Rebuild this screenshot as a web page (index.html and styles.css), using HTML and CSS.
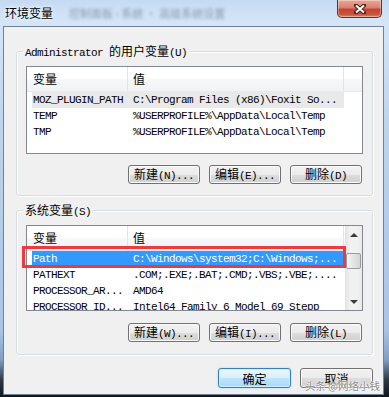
FILE: index.html
```html
<!DOCTYPE html>
<html lang="zh-CN">
<head>
    <meta charset="UTF-8">
    <meta name="viewport" content="width=device-width, initial-scale=1.0">
    <title>环境变量</title>
    <link rel="stylesheet" href="styles.css">
</head>
<body>
    <div class="window">
        <div class="titlebar">
            <span class="title">环境变量</span>
            <span class="ghost">控制面板 › 系统 · 高级系统设置</span>
            <button class="close" aria-label="关闭">
                <svg width="12" height="10" viewBox="0 0 12 10">
                    <path d="M2 1.5 L10 8.5 M10 1.5 L2 8.5" stroke="#4a2018" stroke-width="4" stroke-linecap="square"/>
                    <path d="M2 1.5 L10 8.5 M10 1.5 L2 8.5" stroke="#fff" stroke-width="2"/>
                </svg>
            </button>
        </div>

        <div class="client">
            <section class="group">
                <div class="group-label"><span class="mono">Administrator </span>的用户变量<span class="mono">(U)</span></div>
                <div class="listview user">
                    <div class="lv-body">
                        <div class="lv-header">
                            <div class="col col-name">变量</div>
                            <div class="col col-value">值</div>
                        </div>
                        <div class="row inactive"><span class="name">MOZ_PLUGIN_PATH</span><span>C:\Program Files (x86)\Foxit So...</span></div>
                        <div class="row"><span class="name">TEMP</span><span>%USERPROFILE%\AppData\Local\Temp</span></div>
                        <div class="row"><span class="name">TMP</span><span>%USERPROFILE%\AppData\Local\Temp</span></div>
                    </div>
                </div>
                <div class="actions">
                    <button class="btn">新建<span class="mono">(N)...</span></button>
                    <button class="btn">编辑<span class="mono">(E)...</span></button>
                    <button class="btn">删除<span class="mono">(D)</span></button>
                </div>
            </section>

            <section class="group system">
                <div class="group-label">系统变量<span class="mono">(S)</span></div>
                <div class="listview">
                    <div class="lv-body">
                        <div class="lv-header">
                            <div class="col col-name">变量</div>
                            <div class="col col-value">值</div>
                        </div>
                        <div class="row selected"><span class="name">Path</span><span>C:\Windows\system32;C:\Windows;...</span></div>
                        <div class="row"><span class="name">PATHEXT</span><span>.COM;.EXE;.BAT;.CMD;.VBS;.VBE;....</span></div>
                        <div class="row"><span class="name">PROCESSOR_AR...</span><span>AMD64</span></div>
                        <div class="row"><span class="name">PROCESSOR_ID...</span><span>Intel64 Family 6 Model 69 Stepp</span></div>
                    </div>
                    <div class="scrollbar">
                        <div class="sb-btn"><span class="arrow-up"></span></div>
                        <div class="sb-track"><div class="sb-thumb"></div></div>
                        <div class="sb-btn"><span class="arrow-down"></span></div>
                    </div>
                    <div class="mark"></div>
                </div>
                <div class="actions">
                    <button class="btn">新建<span class="mono">(W)...</span></button>
                    <button class="btn">编辑<span class="mono">(I)...</span></button>
                    <button class="btn">删除<span class="mono">(L)</span></button>
                </div>
            </section>

            <div class="footer">
                <button class="btn default">确定</button>
                <button class="btn">取消</button>
                <span class="watermark">头条 @网络小钱</span>
            </div>
        </div>
    </div>
</body>
</html>
```

FILE: styles.css
```css
body {
    margin: 0;
    font-family: "Noto Sans CJK SC", "Liberation Sans", sans-serif;
    font-size: 12px;
    color: #000;
    background: #1b232c;
}
.window {
    width: 389px;
    height: 397px;
    display: flex;
    flex-direction: column;
    background: linear-gradient(to bottom, #c5daf2 0px, #d4e5f8 22px, #bdd5ef 120px, #a8c5e7 330px, #7f9ec1 360px, #2c3846 380px, #10161c 397px);
}
.titlebar {
    height: 26px;
    flex-shrink: 0;
    display: flex;
    align-items: flex-start;
}
.title {
    margin: 4px 0 0 5px;
    line-height: 17px;
    text-shadow: 0 0 5px #fff, 0 0 3px #fff;
}
.ghost {
    margin: 6px 0 0 16px;
    font-size: 11px;
    line-height: 14px;
    color: #44566c;
    white-space: nowrap;
    filter: blur(1.4px);
    opacity: 0.5;
}
.close {
    margin: 0 7px 0 auto;
    width: 45px;
    height: 18px;
    padding: 0;
    border: 1px solid #6b2a22;
    border-top: none;
    border-radius: 0 0 5px 5px;
    background: linear-gradient(to bottom, #e8a99b 0%, #d9806d 45%, #c4432f 55%, #c85440 85%, #dc8a70 100%);
    box-shadow: inset 0 0 0 1px rgba(255, 255, 255, 0.35);
    display: flex;
    align-items: center;
    justify-content: center;
}
.client {
    margin-left: 3px;
    width: 381px;
    height: 369px;
    box-sizing: border-box;
    border: 1px solid #6f8296;
    background: #f0f0f0;
    padding: 24px 10px 0 12px;
}
.mono {
    font-family: "Liberation Mono", monospace;
    font-size: 11px;
    letter-spacing: -0.6px;
}
.group {
    border: 1px solid #d5dfe5;
    border-radius: 3px;
    box-shadow: inset 1px 1px 0 #fff, 1px 1px 0 #fff;
    padding: 0 9px 11px 9px;
}
.group.system {
    margin-top: 14px;
    padding-bottom: 12px;
}
.group-label {
    width: fit-content;
    margin: -8px 0 0 -3px;
    padding: 0 2px;
    line-height: 14px;
    background: #f0f0f0;
    white-space: nowrap;
}
.listview {
    position: relative;
    margin-top: 6px;
    height: 86px;
    box-sizing: border-box;
    border: 1px solid #828790;
    background: #fff;
    display: flex;
}
.listview.user {
    height: 88px;
}
.lv-body {
    flex: 1;
    overflow: hidden;
}
.lv-header {
    display: flex;
    height: 24px;
    border-bottom: 1px solid #e8e9eb;
    background: linear-gradient(to bottom, #fff 0%, #fff 45%, #f6f7f8 55%, #f1f2f4 100%);
}
.col {
    box-sizing: border-box;
    border-right: 1px solid #e1e3e6;
    line-height: 24px;
    padding-left: 6px;
}
.col-name {
    width: 101px;
}
.col-value {
    width: 216px;
    padding-left: 5px;
}
.row {
    display: flex;
    width: 312px;
    height: 16px;
    margin-left: 5px;
    padding-left: 1px;
    box-sizing: border-box;
    line-height: 16px;
    font-family: "Liberation Mono", monospace;
    font-size: 11px;
    letter-spacing: -0.6px;
    white-space: nowrap;
}
.row .name {
    width: 100px;
    flex-shrink: 0;
}
.row.inactive {
    background: #e9e9e9;
}
.row.selected {
    background: #3399ff;
    color: #fff;
}
.scrollbar {
    width: 17px;
    flex-shrink: 0;
    display: flex;
    flex-direction: column;
    background: linear-gradient(to right, #e2e2e2, #f1f1f1 30%, #f1f1f1 70%, #e9e9e9);
}
.sb-btn {
    height: 17px;
    flex-shrink: 0;
    display: flex;
    align-items: center;
    justify-content: center;
}
.sb-track {
    flex: 1;
    padding-top: 10px;
}
.sb-thumb {
    height: 16px;
    margin: 0 1px;
    box-sizing: border-box;
    border: 1px solid #9a9a9a;
    border-radius: 2px;
    background: linear-gradient(to right, #f5f5f5, #e4e4e4 50%, #d5d5d5);
}
.arrow-up,
.arrow-down {
    width: 0;
    height: 0;
    border-left: 4px solid transparent;
    border-right: 4px solid transparent;
}
.arrow-up {
    border-bottom: 4px solid #3a3a3a;
}
.arrow-down {
    border-top: 4px solid #3a3a3a;
}
.mark {
    position: absolute;
    left: -5px;
    top: 20px;
    width: 324px;
    height: 22px;
    box-sizing: border-box;
    border: 3px solid #ec3a3f;
}
.actions {
    display: flex;
    justify-content: flex-end;
    gap: 9px;
    margin: 11px 1px 0 0;
}
.group.system .actions {
    margin-top: 12px;
}
.btn {
    width: 72px;
    height: 19px;
    padding: 0;
    box-sizing: border-box;
    border: 1px solid #707070;
    border-radius: 3px;
    background: linear-gradient(to bottom, #f2f2f2 0%, #ebebeb 50%, #dddddd 51%, #cfcfcf 100%);
    box-shadow: inset 0 0 0 1px #fbfbfb;
    font: inherit;
    line-height: 16px;
    color: #000;
    white-space: nowrap;
}
.footer {
    position: relative;
    display: flex;
    justify-content: flex-end;
    gap: 9px;
    margin-top: 13px;
}
.footer .btn {
    width: 73px;
    height: 20px;
    line-height: 17px;
}
.btn.default {
    border-color: #3c7fb1;
    background: linear-gradient(to bottom, #eaf6fd 0%, #d9f0fc 50%, #bee6fd 51%, #a7d9f5 100%);
    box-shadow: inset 0 0 0 1px #cdeefc, 0 0 2px #8fd0f5;
}
.watermark {
    position: absolute;
    right: -7px;
    top: 12px;
    font-size: 10.5px;
    line-height: 12px;
    color: #8a8a8a;
    white-space: nowrap;
    text-shadow: 0 0 2px #fff, 0 0 2px #fff, 0 0 1px #fff;
}
```
